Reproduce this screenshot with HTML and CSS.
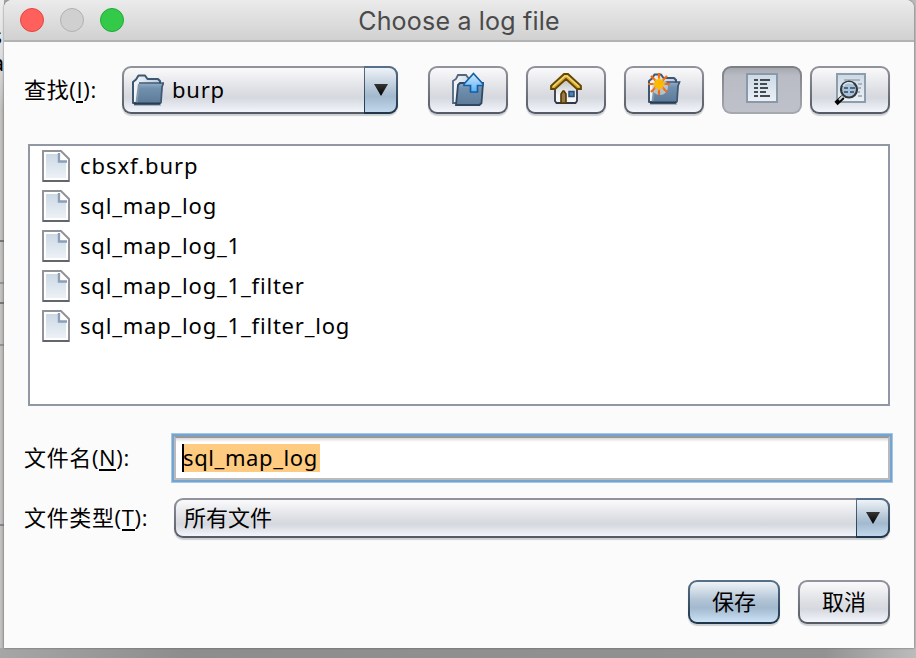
FILE: index.html
```html
<!DOCTYPE html>
<html lang="zh-CN">
<head>
<meta charset="utf-8">
<title>Choose a log file</title>
<link rel="stylesheet" href="styles.css">
</head>
<body>
<svg width="0" height="0" class="defs">
  <defs>
    <linearGradient id="front" x1="0" y1="0" x2="0" y2="1"><stop offset="0" stop-color="#8fabc9"/><stop offset=".25" stop-color="#7190ae"/><stop offset="1" stop-color="#5d7b99"/></linearGradient>
    <linearGradient id="back" x1="0" y1="0" x2="1" y2="0"><stop offset="0" stop-color="#f4f8fc"/><stop offset="1" stop-color="#bccbdc"/></linearGradient>
    <linearGradient id="paper" x1="0" y1="0" x2="0" y2="1"><stop offset="0" stop-color="#cbd9e6"/><stop offset="1" stop-color="#edf1f6"/></linearGradient>
    <linearGradient id="arrow" x1="0" y1="0" x2="0" y2="1"><stop offset="0" stop-color="#d2ecff"/><stop offset="1" stop-color="#58b0f4"/></linearGradient>
    <linearGradient id="wall" x1="0" y1="0" x2="0" y2="1"><stop offset="0" stop-color="#b8b8ba"/><stop offset=".7" stop-color="#f5f5f6"/></linearGradient>
    <linearGradient id="tri" x1="0" y1="0" x2="0" y2="1"><stop offset="0" stop-color="#353535"/><stop offset="1" stop-color="#000"/></linearGradient>
    <g id="folder">
      <path d="M2 32h27" stroke="#9aa0a8" stroke-opacity=".7" stroke-width="2"/>
      <path d="M1 30V9l3-2.500 2.500-4h6.500l2.500 3.500h10.500l2 2V30z" fill="url(#back)" stroke="#3d5671" stroke-width="2" stroke-linejoin="round"/>
      <path d="M7.500 10.500H31L29 30H4z" fill="url(#front)"/>
      <path d="M7 11L4.500 29.500" stroke="#8796a6" stroke-width="2"/>
      <path d="M7 10h24.500l-1.500 4-1 15.500-2 1.500H2" fill="none" stroke="#3d5671" stroke-width="1.700"/>
      <path d="M2 30.500h26" stroke="#263e55" stroke-width="2"/>
    </g>
    <g id="file">
      <path d="M1 1h18l8 8v22H1z" fill="#fff" stroke="#929298" stroke-width="2"/>
      <path d="M4 4h13v8h7v16H4z" fill="url(#paper)"/>
      <path d="M17 3v8.500h8" fill="none" stroke="#8c9fb7" stroke-width="2.500"/>
      <path d="M18.500 3l6.500 7h-6.500z" fill="#fff"/>
      <path d="M1 31h26" stroke="#65656c" stroke-width="2"/>
    </g>
    <path id="down" d="M0 0h14L7 12z" fill="url(#tri)"/>
  </defs>
</svg>
<div class="desktop">
  <div class="behind" aria-hidden="true"><span class="frag one">s</span><span class="frag two">a</span></div>
  <main class="window">
    <header class="titlebar">
      <div class="lights"><i class="red"></i><i class="gray"></i><i class="green"></i></div>
      <h1>Choose a log file</h1>
    </header>
    <div class="toolbar">
      <label>查找(<u>I</u>):</label>
      <div class="combo look">
        <svg class="ico" width="32" height="34"><use href="#folder"/></svg>
        <span class="latin dir">burp</span>
        <span class="drop"><svg width="14" height="12"><use href="#down"/></svg></span>
      </div>
      <button class="btn up"><svg width="34" height="34">
        <path d="M1 31V9l3-2 2-4h8l3 4 9 2v22z" fill="url(#back)" stroke="#52677e" stroke-width="1.800"/>
        <path d="M6 13l2-2h23l-1.500 20-2 2H4z" fill="url(#front)" stroke="#304961" stroke-width="1.800"/>
        <path d="M21.500 1.500L31 12v1.500h-5.500V20h-7v-6.500H12V12z" fill="url(#arrow)" stroke="#165fa5" stroke-width="1.700"/>
      </svg></button>
      <button class="btn home"><svg width="34" height="34">
        <path d="M5 15L16 5l11 10v14l-1.500 2h-19L5 29z" fill="url(#wall)" stroke="#30394a" stroke-width="1.800"/>
        <path d="M11 31V22l2-3h1l2 3v9z" fill="#9b7948" stroke="#523900" stroke-width="1.600"/>
        <rect x="19" y="19.500" width="5" height="5" fill="#4f83b5" stroke="#2a4d77" stroke-width="1.500"/>
        <path d="M1 17v-3L14 2h4l13 12v3h-4L16 7 5 17z" fill="#d5aa38" stroke="#654800" stroke-width="1.800"/>
        <path d="M3 14.500L15 4h2l12 10.500" fill="none" stroke="#f5d77c" stroke-width="1.300"/>
      </svg></button>
      <button class="btn new"><svg width="34" height="34">
        <use href="#folder"/><circle cx="12" cy="15" r="8" fill="#cbd5dd" opacity=".75"/>
        <path d="M11 1v22M0 12h22M3 4l16 16M19 4L3 20" stroke="#f46a12" stroke-width="2.200"/>
        <path d="M11 5l1.500 3 3-1-1 3 3 2-3 2 1 3-3-1-1.500 3-1.500-3-3 1 1-3-3-2 3-2-1-3 3 1z" fill="#ffba00"/>
      </svg></button>
      <button class="btn list pressed"><svg width="34" height="34">
        <rect x="1" y="2" width="30" height="28" fill="url(#paper)" stroke="#8999a8" stroke-width="2"/>
        <path d="M8 8h4m2 0h10M8 12h4m2 0h7M8 16h4m2 0h8M8 20h4m2 0h6M8 24h4m2 0h10" stroke="#454b52" stroke-width="2"/>
      </svg></button>
      <button class="btn detail"><svg width="34" height="34">
        <rect x="3" y="2" width="28" height="28" fill="url(#paper)" stroke="#8c9dac" stroke-width="2"/>
        <path d="M10 8h16M24 12h4M24 16h3M24 20h2M24 24h4" stroke="#aab4bf" stroke-width="2"/>
        <path d="M9 25l-7 6.500" stroke="#000" stroke-width="4.500"/><path d="M9 24l-4 4" stroke="#d0d3d7" stroke-width="2"/>
        <circle cx="15" cy="17.500" r="8" fill="#a9c3dd" stroke="#35383b" stroke-width="2.200"/>
        <path d="M9 14a7 7 0 0 1 10-2" fill="none" stroke="#d8e4ef" stroke-width="1.500"/>
        <path d="M10 16h4m2 0h5M10 20h4m2 0h4" stroke="#53677c" stroke-width="2"/>
      </svg></button>
    </div>
    <ul class="files latin">
      <li><svg width="28" height="32"><use href="#file"/></svg><span class="first">cbsxf.burp</span></li>
      <li><svg width="28" height="32"><use href="#file"/></svg><span>sql_map_log</span></li>
      <li><svg width="28" height="32"><use href="#file"/></svg><span>sql_map_log_1</span></li>
      <li><svg width="28" height="32"><use href="#file"/></svg><span>sql_map_log_1_filter</span></li>
      <li><svg width="28" height="32"><use href="#file"/></svg><span>sql_map_log_1_filter_log</span></li>
    </ul>
    <div class="row name">
      <label>文件名(<u>N</u>):</label>
      <div class="field"><div class="inner"><span class="sel">sql_map_log</span></div></div>
    </div>
    <div class="row type">
      <label>文件类型(<u>T</u>):</label>
      <div class="combo kind"><span class="all">所有文件</span><span class="drop"><svg width="14" height="12"><use href="#down"/></svg></span></div>
    </div>
    <footer><button class="btn save">保存</button><button class="btn cancel">取消</button></footer>
  </main>
</div>
</body>
</html>
```
FILE: styles.css
```css
* { box-sizing: border-box; }
body { margin: 0; width: 916px; height: 658px; overflow: hidden; font: 22px/30px "Noto Sans", "Noto Sans CJK SC", sans-serif; color: #000; }
.defs { position: absolute; }
.desktop {
  position: relative; height: 658px; padding: 0 2px 10px 4px;
  background: linear-gradient(90deg, #a6a6a6, #8d8d8d 20%, #929292 90%, #bcbcbc);
}
.behind {
  position: absolute; left: 0; top: 0; width: 4px; height: 648px; overflow: hidden;
  background:
    linear-gradient(#777, #777) 0 240px / 4px 2px no-repeat,
    linear-gradient(#929292, #929292) 0 282px / 4px 2px no-repeat,
    linear-gradient(#777, #777) 0 302px / 4px 2px no-repeat,
    linear-gradient(#929292, #929292) 0 344px / 4px 2px no-repeat,
    linear-gradient(#858588, #858588) 0 524px / 4px 2px no-repeat,
    linear-gradient(90deg, #c5c4c3, #b0afae);
}
.behind::before { content: ""; position: absolute; inset: 0 0 auto; height: 110px; background: linear-gradient(#eee, #ddd 50%, transparent); }
.frag { position: absolute; right: 1px; }
.one { top: 20px; right: 2px; }
.two { top: 47px; right: 0; }
.window {
  position: relative; display: flex; flex-direction: column; height: 648px; overflow: hidden;
  background: #fbfbfb; border-radius: 8px 8px 0 0; box-shadow: 0 0 2px #555;
}
.titlebar {
  position: relative; flex: none; height: 42px; display: flex; align-items: center; justify-content: center;
  background: linear-gradient(#ebebeb, #d1d1d1); border-bottom: 2px solid #b3b3b3;
}
h1 { margin: 0; padding-top: 2px; font: 400 25px/40px Inter, Roboto, sans-serif; letter-spacing: .2px; color: #4a4a4a; }
.lights { position: absolute; left: 16px; top: 8px; display: flex; gap: 16px; }
.lights i { width: 24px; height: 24px; border-radius: 50%; border: 1px solid; }
.lights .red { background: #ff605c; border-color: #e14742; }
.lights .gray { background: #d0d0d0; border-color: #b1b1b1; }
.lights .green { background: #34ca49; border-color: #20aa35; }
label { flex: none; white-space: nowrap; font-family: "Open Sans", "Noto Sans CJK SC", sans-serif; letter-spacing: .65px; }
u { text-decoration: none; border-bottom: 2px solid #000; display: inline-block; line-height: 23px; }
.latin { letter-spacing: .8px; }
.toolbar { flex: none; display: flex; height: 48px; margin-top: 24px; padding-left: 20px; }
.toolbar label { width: 98px; padding-top: 8px; }
.combo, .btn {
  border: 2px solid transparent; border-radius: 9px; box-shadow: 0 2px 1px #cdd0d3;
  background: linear-gradient(#fafafb, #dedfe4 50%, #d5d8de 68%, #f3f5fd) padding-box, linear-gradient(#92959d, #555963) border-box;
}
.combo { display: flex; align-items: center; position: relative; }
.look { width: 276px; padding-left: 8px; margin-right: 30px; }
.ico { margin-top: 0; }
.dir { margin: -2px 0 0 8px; }
.drop {
  position: absolute; right: -2px; top: -2px; bottom: -2px; width: 34px;
  display: flex; align-items: center; justify-content: center;
  border: 2px solid transparent; border-left-width: 1px; border-radius: 0 9px 9px 0;
  background: linear-gradient(#eef3f7, #b2c4d6 50%, #a2b9ce 65%, #c0d7ec) padding-box, linear-gradient(#58718a, #1f3448) border-box;
}
.btn { width: 80px; height: 48px; padding: 0; margin: 0 18px 0 0; font: inherit; color: #000; display: block; flex: none; }
.btn svg { display: block; margin: -2px 0 0 22px; }
.btn.pressed { margin-right: 8px; box-shadow: none; background: linear-gradient(#a6a8b0, #b9bcc4 18%, #bfc1ca) padding-box, linear-gradient(#7c7e84, #a7a9b0) border-box; }
.files { flex: none; list-style: none; width: 862px; height: 262px; margin: 30px 0 0 24px; padding: 0 0 0 12px; border: 2px solid #9297a5; background: #fff; }
.files li { height: 40px; display: flex; align-items: center; }
.files svg { margin-right: 10px; flex: none; }
.files span { margin-top: -2px; }
.files .first { letter-spacing: .95px; }
.row { flex: none; display: flex; padding-left: 20px; }
.name { margin-top: 27px; height: 50px; }
.name label { width: 147px; padding-top: 9px; }
.field { width: 722px; height: 50px; padding: 2px; background: #74a4d2; border: 1px solid #a7c6e3; }
.inner { height: 44px; border: 2px solid #b9bbbd; border-top-color: #989898; background: linear-gradient(#d9d9d9, #fff 4px); padding: 6px; }
.sel { display: block; width: 138px; height: 28px; line-height: 26px; letter-spacing: .6px; background: #ffcb80; box-shadow: inset 2px 0 #000; padding-left: 1px; }
.type { margin-top: 15px; height: 40px; }
.type label { width: 150px; padding-top: 4px; }
.kind { width: 716px; }
.all { padding: 0 0 2px 8px; }
footer { display: flex; justify-content: flex-end; gap: 18px; margin-top: 42px; padding-right: 24px; }
footer .btn { width: 92px; height: 44px; margin: 0; padding-bottom: 2px; }
.save { background: linear-gradient(#eef3f7, #b2c4d6 45%, #a2b9ce 65%, #cce2f6) padding-box, linear-gradient(#58718a, #1f3448) border-box; }
```
